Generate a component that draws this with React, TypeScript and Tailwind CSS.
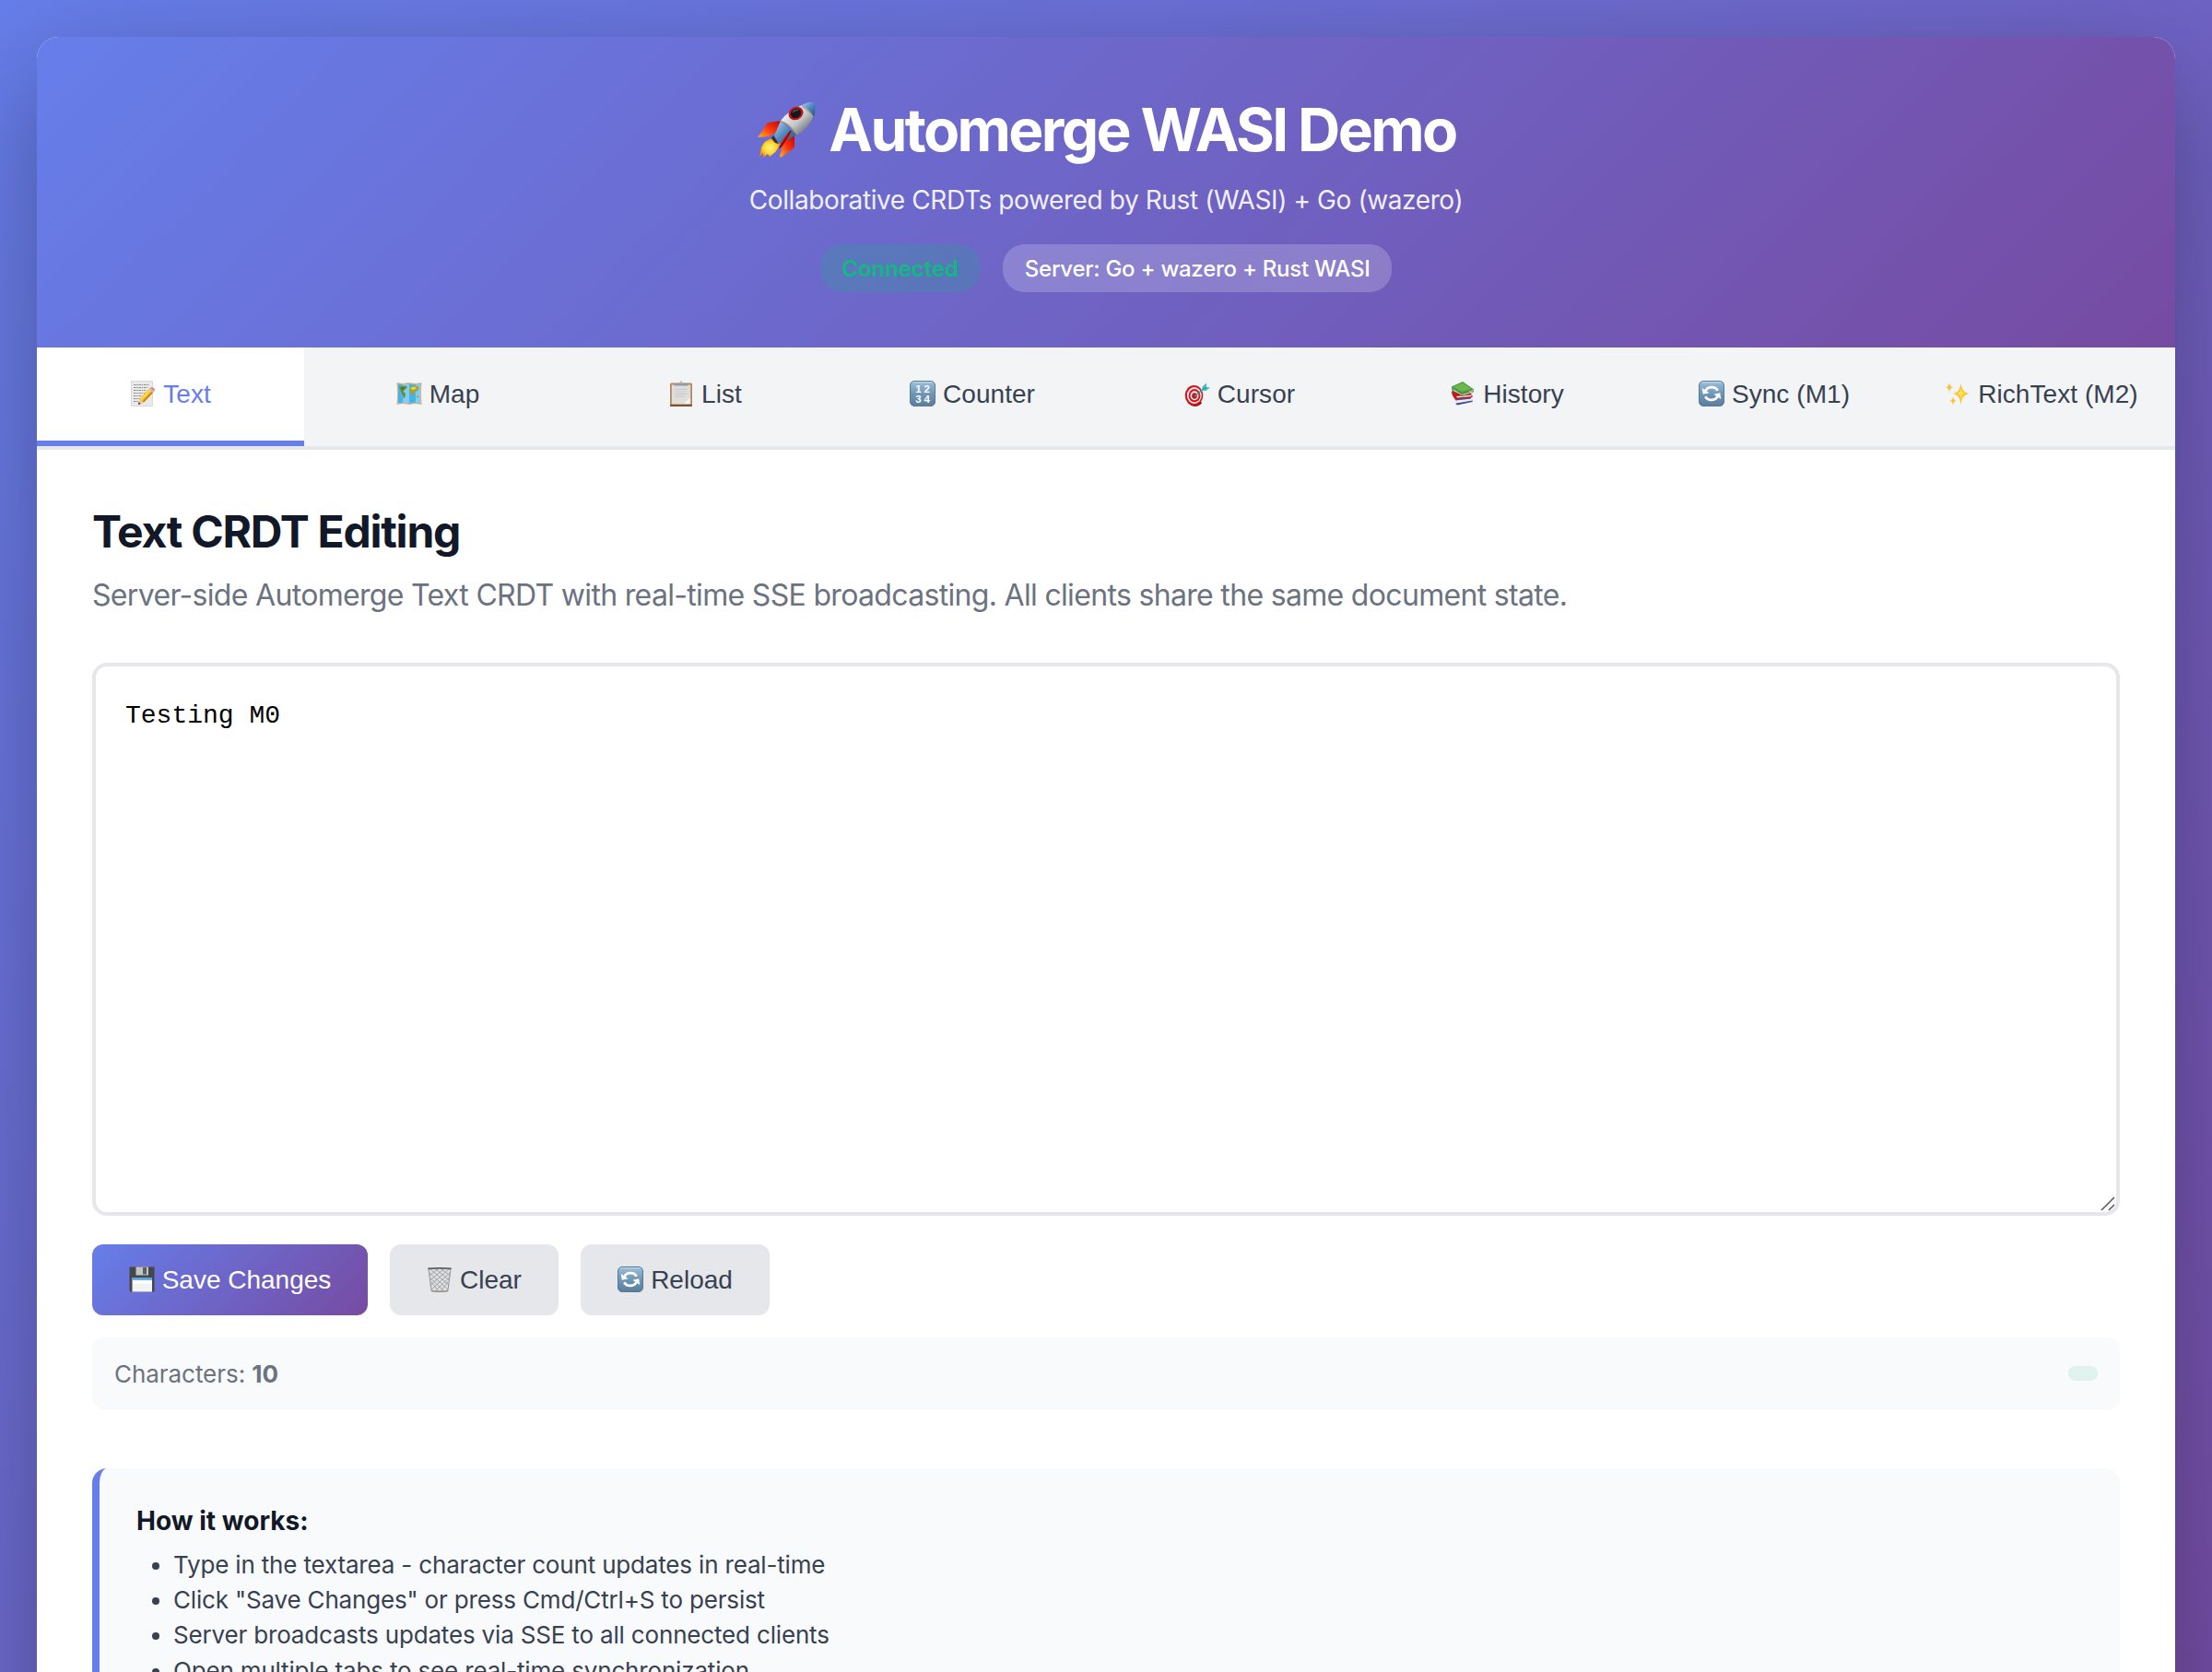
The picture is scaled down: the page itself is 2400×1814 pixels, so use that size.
import type { ReactNode } from 'react';

function Rocket() {
  return (
    <svg className="h-[64px] w-[66px]" viewBox="0 0 66 64">
      <defs>
        <linearGradient id="rk-body" x1="0" y1="0" x2="1" y2="1">
          <stop offset="0.2" stopColor="#f2f4f2" />
          <stop offset="0.55" stopColor="#c3c8c8" />
          <stop offset="0.85" stopColor="#6d7376" />
        </linearGradient>
        <linearGradient id="rk-blue" x1="0" y1="0" x2="1" y2="1">
          <stop offset="0.1" stopColor="#9cc6ea" />
          <stop offset="0.5" stopColor="#5288bd" />
          <stop offset="1" stopColor="#25496f" />
        </linearGradient>
        <linearGradient id="rk-fin" x1="1" y1="0" x2="0" y2="1">
          <stop offset="0.1" stopColor="#c80d05" />
          <stop offset="0.5" stopColor="#fa3510" />
          <stop offset="1" stopColor="#ffb322" />
        </linearGradient>
        <radialGradient id="rk-fire">
          <stop offset="0" stopColor="#fff78a" />
          <stop offset="0.6" stopColor="#ffd72e" />
          <stop offset="1" stopColor="#f58a10" />
        </radialGradient>
      </defs>
      <path d="M28 22 L13 24 Q10 27 8.500 31 L2 40 L14 39 L22 35Z" fill="url(#rk-fin)" />
      <path d="M42 38 L42 51 Q34 57 27 62 L26 60 L30 46Z" fill="url(#rk-fin)" />
      <path d="M18 41 Q9 43 6 51 L4 61 L8 57 L8 62 L13 58 L15 61 Q20 57 22 55 L27 47Z" fill="url(#rk-fire)" />
      <path d="M27 22 Q24 29 20 38 L26 47 Q37 42 44 37Z" fill="url(#rk-blue)" />
      <path d="M19 38 L25 47 L21 46 L17 41Z" fill="#24313b" />
      <path d="M27 22 Q35 11 50 5 L62 18 Q57 31 45 37 Q38 25 27 22Z" fill="url(#rk-body)" />
      <path d="M49 5.500 Q57 0.500 63.500 2 Q66 9 62.500 19 Q57 10 49 5.500Z" fill="url(#rk-blue)" />
      <path d="M50 6 Q58 11 62 18" fill="none" stroke="#a9afa4" strokeWidth="1.500" />
      <path d="M27 22 Q37 26 45 37" fill="none" stroke="#b7a66e" strokeWidth="1.200" />
      <path d="M39 32 Q29 39 25 53 Q35 45 39 32Z" fill="#e01a10" />
      <path d="M38 33 Q33 42 26 51" fill="none" stroke="#6e0a08" strokeWidth="1.400" />
      <ellipse cx="43.500" cy="14" rx="8.300" ry="7" transform="rotate(-28 43.500 14)" fill="#c8151b" />
      <ellipse cx="43.500" cy="14" rx="6" ry="4.900" transform="rotate(-32 43.500 14)" fill="#15191c" />
      <path d="M40 13 Q42 10 46 10.500" fill="none" stroke="#5b6468" strokeWidth="1.300" />
    </svg>
  );
}

function Icon({ children }: { children: ReactNode }) {
  return (
    <svg className="h-[28px] w-[28px] shrink-0" viewBox="0 0 28 28">
      {children}
    </svg>
  );
}

function MemoIcon() {
  return (
    <Icon>
      <rect x="1.500" y="0.500" width="23" height="27" fill="#e9e9e9" stroke="#cfcfcf" strokeWidth="0.700" />
      <path d="M4 4.500h17M4 7.500h15M4 10.500h13M4 13.500h12M4 16.500h9M4 19.500h7M4 22.500h5" stroke="#8e8e8e" strokeWidth="1.100" strokeDasharray="2.500 0.700 1.500 0.800" />
      <path d="M9 26 L10.500 19.500 L20.500 9 L25 13 L15 23.500Z" fill="#f6b521" />
      <path d="M11 20 L21 9.500 L22.500 10.800 L12.500 21.500Z" fill="#ffdc57" />
      <path d="M13.800 22.500 L24 12 L25 13 L15 23.500Z" fill="#c47a10" />
      <path d="M20.500 9 L22 7.500 L26.500 11.500 L25 13Z" fill="#b9bec4" />
      <path d="M22 7.500 Q24 6.500 26 8.200 Q27.500 10 26.500 11.500Z" fill="#ea6a77" />
      <path d="M9 26 L10.500 19.500 L15 23.500Z" fill="#ecc99a" />
      <path d="M9 26 L9.600 23.300 L11.600 25Z" fill="#2c2c2c" />
    </Icon>
  );
}

function MapIcon() {
  return (
    <Icon>
      <path d="M0.500 2 L7 3 L14 2 L21 3 L27.500 2 L26.800 14 L27.500 26 L21 25 L14 26 L7 25 L0.500 26 L1.200 14Z" fill="#d6b48c" />
      <path d="M2 3.500 L7 4.200 L14 3.400 L21 4.200 L26 3.500 V24.500 L21 23.700 L14 24.600 L7 23.700 L2 24.500Z" fill="#45b4ea" />
      <path d="M7 4.200 L14 3.400 V24.600 L7 23.700Z M21 4.200 L26 3.500 V24.500 L21 23.700Z" fill="#82cef3" />
      <path d="M3 6.500 L10 5.500 L12 7 L9.500 9.500 L7.500 11.500 L10 14 L9.500 17 L8 20 L7 15.500 L4.500 10.500Z" fill="#6f8a2c" />
      <path d="M14.500 7 L19 5.500 L24.500 6.500 L24 9.500 L22.500 12 L20.500 10.500 L19.500 12.500 L18.500 17 L17 15.500 L14.500 11.500Z" fill="#a8a12c" />
      <path d="M22 16 L24.500 16.500 L23.800 18.500 L21.800 18Z" fill="#b8a03a" />
      <path d="M15 8 L20 6.500 L22 8.500 L18 10Z" fill="#eedb4e" />
      <path d="M5 8 L8 7.500 L7 10Z" fill="#2d6f31" />
    </Icon>
  );
}

function ClipboardIcon() {
  return (
    <Icon>
      <rect x="2" y="2.500" width="24" height="25.500" rx="1.500" fill="#b58a58" />
      <rect x="2" y="25.800" width="24" height="2.200" rx="1" fill="#80512a" />
      <rect x="3.800" y="4.500" width="20.400" height="21" fill="#dedede" />
      <path d="M7 9.500h14M7 12h12M7 14.500h14M7 17h11" stroke="#c6c6c6" strokeWidth="0.900" />
      <path d="M17 25 L23.800 18.500 V25Z" fill="#f4f4f4" />
      <path d="M6.500 5.500 Q7 2.800 10 2.800 H18 Q21 2.800 21.500 5.500Z" fill="#929ba3" />
      <path d="M12.200 3.500 L14 0.500 L15.800 3.500" fill="none" stroke="#9cb2c4" strokeWidth="1" />
    </Icon>
  );
}

function BlueTile({ id, children }: { id: string; children: ReactNode }) {
  return (
    <Icon>
      <defs>
        <linearGradient id={id} x1="0" y1="0" x2="0" y2="1">
          <stop offset="0" stopColor="#9dc0d8" />
          <stop offset="0.500" stopColor="#7097b8" />
          <stop offset="1" stopColor="#5c7d9b" />
        </linearGradient>
      </defs>
      <rect x="0.500" y="0.500" width="27" height="27" rx="4.500" fill={`url(#${id})`} stroke="#557a98" strokeWidth="1" />
      <path d="M4 1.800h20" stroke="#c9dfec" strokeWidth="1" strokeLinecap="round" />
      {children}
    </Icon>
  );
}

function NumbersIcon() {
  return (
    <BlueTile id="tile-numbers">
      <g fill="#ffffff" fontFamily='"Liberation Sans", sans-serif' fontSize="11.500" fontWeight="700" textAnchor="middle">
        <text x="9.500" y="12.600">1</text>
        <text x="18.700" y="12.600">2</text>
        <text x="9.500" y="23.600">3</text>
        <text x="18.700" y="23.600">4</text>
      </g>
    </BlueTile>
  );
}

function CycleIcon({ id }: { id: string }) {
  return (
    <BlueTile id={id}>
      <path d="M7 11.800 A7.800 7.800 0 0 1 20.800 10.800" fill="none" stroke="#fff" strokeWidth="2.700" />
      <path d="M21 16.200 A7.800 7.800 0 0 1 7.200 17.200" fill="none" stroke="#fff" strokeWidth="2.700" />
      <path d="M3.800 8 L4.800 14.800 L11.600 13.200Z" fill="#fff" />
      <path d="M24.200 20 L23.200 13.200 L16.400 14.800Z" fill="#fff" />
    </BlueTile>
  );
}

function TargetIcon() {
  return (
    <Icon>
      <path d="M2 20 Q5 28 12 28 Q17 27 19 24 L14 18Z" fill="#7d0f0f" />
      <ellipse cx="10.500" cy="16" rx="9.800" ry="11" fill="#cf1820" />
      <ellipse cx="10.800" cy="16" rx="7.900" ry="8.900" fill="#f6efee" />
      <ellipse cx="11" cy="16.200" rx="6.400" ry="7.200" fill="#d01b23" />
      <ellipse cx="11" cy="16.300" rx="4.400" ry="5" fill="#f6efee" />
      <ellipse cx="11" cy="16.500" rx="2.800" ry="3.200" fill="#c5141c" />
      <path d="M11 17 L21.500 8.500" stroke="#2ca3ac" strokeWidth="1.600" />
      <path d="M19 10.500 L19.500 6.500 L24 2.500 L24 7 L28 7.500 L23.500 11Z" fill="#45bfc8" />
      <path d="M20 9.800 L24 7" stroke="#1b7f88" strokeWidth="1" />
    </Icon>
  );
}

function BooksIcon() {
  return (
    <Icon>
      <path d="M5 19 L22 17.500 L24.500 22 L9 25.500Z" fill="#4257a5" />
      <path d="M6.500 21.500 L24 19.500 L24.500 22 L8 24.800Z" fill="#eceef4" />
      <path d="M6 24.800 L24.800 21.500 L24.500 23 L8 26.500Z" fill="#3b4a92" />
      <path d="M2 11.500 L21 12 L24.500 16 L24.500 18.200 L6 20.500 Q2 16 2 11.500Z" fill="#c8171b" />
      <path d="M7 17 L23.500 15.500 L23.500 17 L8 18.500Z" fill="#f1eee9" />
      <path d="M2 8.500 L13 14.800 L26 10.500 L25.500 12.500 L14 17 L3 11.500Z" fill="#2c6a2c" />
      <path d="M3.500 9.500 L13.500 15 L25 11.300 L25 12.300 L14 16 L4 11Z" fill="#f2f0e4" />
      <path d="M1.800 6.500 L14 1 L26.500 9.800 L13.500 14.500 L2.300 8.800Z" fill="#4d9c3e" />
      <path d="M4 6.800 L14 2.500 L23 8.700 L13 12Z" fill="#6db752" />
    </Icon>
  );
}

function SparklesIcon() {
  return (
    <Icon>
      <path d="M17.500 3 Q18.500 12.800 26.500 14 Q18.500 15.200 17.500 26 Q16.500 15.200 9 14 Q16.500 12.800 17.500 3Z" fill="#fcc52e" />
      <path d="M17.500 8 Q18 13.300 22 14 Q18 14.700 17.500 20 Q17 14.700 13.500 14 Q17 13.300 17.500 8Z" fill="#ffe45f" />
      <path d="M5 2 Q5.500 6.600 9 7.300 Q5.500 8 5 12.500 Q4.500 8 1 7.300 Q4.500 6.600 5 2Z" fill="#fbbf34" />
      <path d="M9 17 Q9.400 21 12.500 21.800 Q9.400 22.600 9 27 Q8.600 22.600 5.500 21.800 Q8.600 21 9 17Z" fill="#fbc33c" />
    </Icon>
  );
}

function FloppyIcon() {
  return (
    <Icon>
      <path d="M0.500 1 Q0.500 0.500 1 0.500 H27 Q27.500 0.500 27.500 1 V27 Q27.500 27.500 27 27.500 H1.500 L0.500 26.500Z" fill="#45484b" />
      <rect x="7.500" y="0.500" width="13.500" height="9" fill="#c2c4c6" />
      <rect x="15" y="1" width="4" height="7.500" fill="#5b5e61" />
      <path d="M7.500 9.500h13.500" stroke="#85888b" strokeWidth="0.800" />
      <rect x="3.500" y="12" width="21.500" height="15.500" fill="#f2f3f5" />
      <rect x="3.500" y="12" width="21.500" height="2.800" fill="#5ba4dc" />
      <path d="M4 17h20.500" stroke="#fff" strokeWidth="3" />
    </Icon>
  );
}

function BasketIcon() {
  return (
    <Icon>
      <path d="M2 2.500 L5.200 27 Q14 28.500 22.800 27 L26 2.500Z" fill="#dedfe0" />
      <path d="M3 7 L23 25 M3.500 12 L19 27 M5 17 L13 27 M4 3 L24.500 20.500 M10 3 L25 15.500 M16 3 L26 10.500 M25 7 L5 25 M24.500 12 L9 27 M23 17 L15 27 M24 3 L3.500 20.500 M18 3 L3 15.500 M12 3 L2 10.500" stroke="#8d9093" strokeWidth="0.750" />
      <path d="M2 2.500 L5.200 27 M26 2.500 L22.800 27" stroke="#94979a" strokeWidth="1" />
      <path d="M5 25.800 Q14 27.800 23 25.800 L22.800 27.200 Q14 28.700 5.200 27.200Z" fill="#8b8175" />
      <path d="M1.300 1.500 Q14 0.400 26.700 1.500 V3.300 Q14 2.200 1.300 3.300Z" fill="#5a5e62" />
    </Icon>
  );
}

const tabs: { label: string; icon: ReactNode }[] = [
  { label: 'Text', icon: <MemoIcon /> },
  { label: 'Map', icon: <MapIcon /> },
  { label: 'List', icon: <ClipboardIcon /> },
  { label: 'Counter', icon: <NumbersIcon /> },
  { label: 'Cursor', icon: <TargetIcon /> },
  { label: 'History', icon: <BooksIcon /> },
  { label: 'Sync (M1)', icon: <CycleIcon id="tile-sync" /> },
  { label: 'RichText (M2)', icon: <SparklesIcon /> },
];

const steps = [
  'Type in the textarea - character count updates in real-time',
  'Click "Save Changes" or press Cmd/Ctrl+S to persist',
  'Server broadcasts updates via SSE to all connected clients',
  'Open multiple tabs to see real-time synchronization',
];

function Header() {
  return (
    <header className="flex h-[337px] flex-col items-center bg-[linear-gradient(135deg,#667eea_0%,#764ba2_100%)] pt-[60px] text-white">
      <h1 className="flex h-[81px] items-center gap-[13px] text-[64px] leading-[83px] font-bold tracking-[-2.62px] whitespace-nowrap">
        <Rocket />
        <span>Automerge WASI Demo</span>
      </h1>
      <p className="mt-4 text-[28px] leading-[41px] tracking-[-0.4px] opacity-90">
        Collaborative CRDTs powered by Rust (WASI) + Go (wazero)
      </p>
      <div className="mt-[27px] flex gap-6 text-[24px] leading-[54px] font-medium">
        <span className="h-[52px] rounded-[24px] bg-[#10b981]/20 px-6 font-semibold tracking-[-0.1px] text-[#10b981]">Connected</span>
        <span className="h-[52px] rounded-[24px] bg-white/20 px-6 tracking-[-0.26px]">Server: Go + wazero + Rust WASI</span>
      </div>
    </header>
  );
}

function Tabs() {
  return (
    <nav className="grid h-[111px] grid-cols-8 border-b-4 border-[#e5e7eb] bg-[#f3f4f6] font-['Liberation_Sans',sans-serif] text-[28px] tracking-[0.06px]">
      {tabs.map((tab, i) => (
        <button
          key={tab.label}
          className={
            i === 0
              ? 'flex items-center justify-center gap-[8px] border-b-[6px] border-[#667eea] bg-white whitespace-nowrap text-[#667eea]'
              : 'flex items-center justify-center gap-[8px] border-b-[6px] border-transparent whitespace-nowrap text-[#374151]'
          }
        >
          <span className="-mt-[2px]">{tab.icon}</span>
          <span>{tab.label}</span>
        </button>
      ))}
    </nav>
  );
}

function ActionButton({ label, icon, width }: { label: string; icon: ReactNode; width: string }) {
  return (
    <button className={`flex h-[77px] items-center justify-center gap-[8px] rounded-[12px] ${width}`}>
      <span className="-mt-[2px]">{icon}</span>
      <span>{label}</span>
    </button>
  );
}

export default function App() {
  return (
    <div className="h-[1814px] overflow-hidden bg-[linear-gradient(135deg,#667eea_0%,#764ba2_100%)] bg-[length:100%_2060px] p-10 font-['Inter',sans-serif]">
      <div className="h-[2000px] overflow-hidden rounded-[24px] bg-white shadow-[0_40px_120px_rgba(0,0,0,0.3)]">
        <Header />
        <Tabs />
        <main className="px-[60px] pt-[60px]">
          <h2 className="text-[48px] leading-[57px] font-bold tracking-[-1.24px] text-[#111827]">Text CRDT Editing</h2>
          <p className="mt-[15px] text-[32px] leading-[51px] tracking-[-0.675px] text-[#6b7280]">
            Server-side Automerge Text CRDT with real-time SSE broadcasting. All clients share the same document state.
          </p>
          <div className="relative mt-12 h-[600px] rounded-[16px] border-4 border-[#e5e7eb] px-8 py-8 font-['Liberation_Mono',monospace] text-[28px] leading-[44px] text-black">
            Testing M0
            <svg className="absolute right-0 bottom-0 h-[18px] w-[18px]" viewBox="0 0 18 18">
              <path d="M2 16 L16 2 M10 16 L16 10" stroke="#555" strokeWidth="1.500" />
            </svg>
          </div>
          <div className="mt-[31px] flex gap-6 font-['Liberation_Sans',sans-serif] text-[28px] text-[#374151]">
            <div className="rounded-[12px] bg-[linear-gradient(135deg,#667eea_0%,#764ba2_100%)] text-white">
              <ActionButton label="Save Changes" icon={<FloppyIcon />} width="w-[299px]" />
            </div>
            <div className="rounded-[12px] bg-[#e5e7eb]">
              <ActionButton label="Clear" icon={<BasketIcon />} width="w-[183px]" />
            </div>
            <div className="rounded-[12px] bg-[#e5e7eb]">
              <ActionButton label="Reload" icon={<CycleIcon id="tile-reload" />} width="w-[205px]" />
            </div>
          </div>
          <div className="mt-6 flex h-[78px] items-center justify-between rounded-[12px] bg-[#f9fafb] px-6 text-[26px] tracking-[-0.05px] text-[#6b7280]">
            <span>
              Characters: <strong className="font-bold">10</strong>
            </span>
            <span className="h-4 w-8 rounded-[8px] bg-[#e0f2ed]" />
          </div>
          <section className="mt-16 h-[360px] rounded-[16px] border-l-8 border-[#667eea] bg-[#f9fafb] px-10 pt-10">
            <h3 className="text-[28px] leading-[34px] font-bold tracking-[0.02px] text-[#111827]">How it works:</h3>
            <ul className="mt-[12px] list-disc pl-10 text-[26px] leading-[38.2px] tracking-[-0.17px] text-[#374151]">
              {steps.map((step) => (
                <li key={step}>{step}</li>
              ))}
            </ul>
          </section>
        </main>
      </div>
    </div>
  );
}
